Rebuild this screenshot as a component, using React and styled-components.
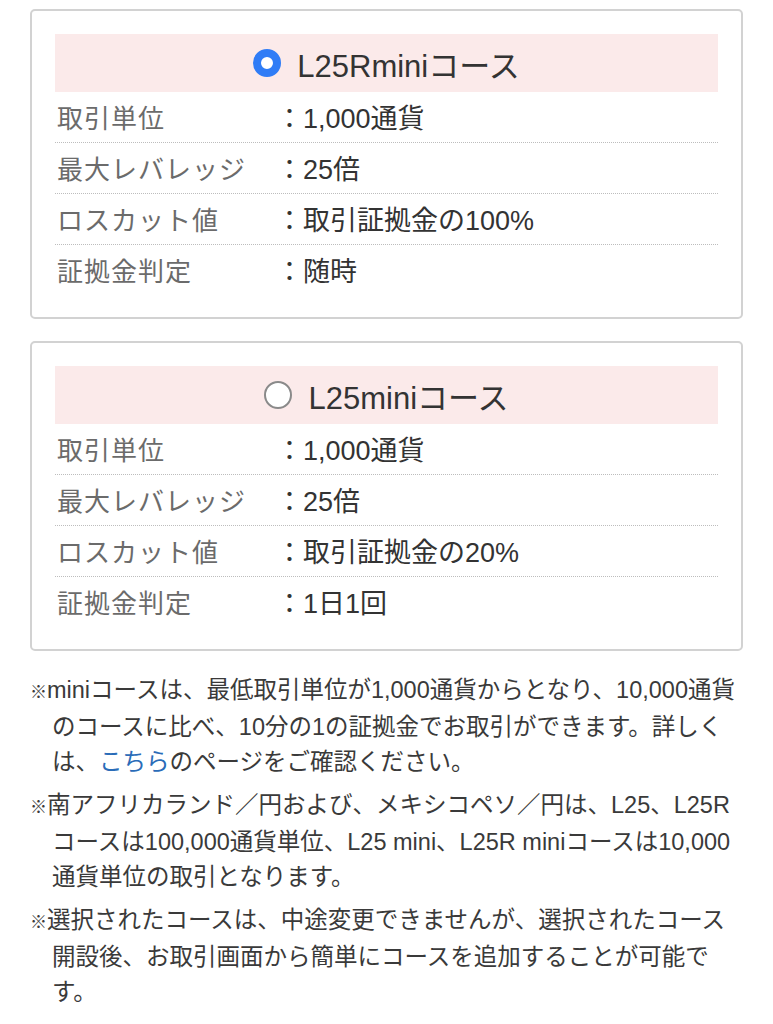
import React, { useState } from 'react';
import styled, { createGlobalStyle } from 'styled-components';

const GlobalStyle = createGlobalStyle`
  body {
    margin: 0;
    background: #fff;
    font-family: "Liberation Sans", "Noto Sans CJK JP", sans-serif;
    color: #333;
  }
`;

const Page = styled.main`
  padding: 9px 30px 20px;
`;

const Card = styled.label`
  display: block;
  border: 2px solid #d2d2d2;
  border-radius: 5px;
  padding: 23px 23px 22px;
  margin-bottom: 22px;
  cursor: pointer;
`;

const Header = styled.div`
  display: flex;
  justify-content: center;
  align-items: center;
  gap: 16px;
  height: 58px;
  background: #fbeaea;
  font-size: 31px;
  color: #333;
`;

const Radio = styled.span`
  box-sizing: border-box;
  width: 28px;
  height: 28px;
  border-radius: 50%;
  border: ${({ checked }) => (checked ? '8.5px solid #2f7cf6' : '2.5px solid #8a8a8a')};
  background: #fff;
  flex-shrink: 0;
`;

const Row = styled.div`
  display: grid;
  grid-template-columns: 219px 1fr;
  align-items: center;
  height: 50px;
  padding-left: 2px;
  padding-bottom: 2px;
  box-sizing: border-box;
  & + & {
    border-top: 1px dotted #bdbdbd;
    height: 51px;
  }
`;

const Label = styled.span`
  color: #6b6b6b;
  font-size: 26px;
  letter-spacing: 1px;
`;

const Value = styled.span`
  color: #333;
  font-size: 27px;
  white-space: nowrap;
`;

const Notes = styled.div`
  margin-top: 20px;
  font-size: 23.5px;
  line-height: 35px;
  color: #3a3a3a;
  white-space: nowrap;
`;

const Note = styled.p`
  margin: 0 0 8px;
  padding-left: 22px;
  text-indent: -22px;
`;

const Mark = styled.span`
  font-size: 17px;
  display: inline-block;
  width: 17px;
  text-indent: 0;
`;

const Link = styled.a`
  color: #2a6cb8;
  text-decoration: none;
`;

const courses = [
  { id: 'l25rmini', name: 'L25Rminiコース', loss: '取引証拠金の100%', judge: '随時' },
  { id: 'l25mini', name: 'L25miniコース', loss: '取引証拠金の20%', judge: '1日1回' },
];

export default function App() {
  const [selected, setSelected] = useState('l25rmini');

  return (
    <Page>
      <GlobalStyle />
      {courses.map((c) => (
        <Card key={c.id} onClick={() => setSelected(c.id)}>
          <Header>
            <Radio checked={selected === c.id} />
            <span>{c.name}</span>
          </Header>
          <Row>
            <Label>取引単位</Label>
            <Value>：1,000通貨</Value>
          </Row>
          <Row>
            <Label>最大レバレッジ</Label>
            <Value>：25倍</Value>
          </Row>
          <Row>
            <Label>ロスカット値</Label>
            <Value>：{c.loss}</Value>
          </Row>
          <Row>
            <Label>証拠金判定</Label>
            <Value>：{c.judge}</Value>
          </Row>
        </Card>
      ))}
      <Notes>
        <Note>
          <Mark>※</Mark>miniコースは、最低取引単位が1,000通貨からとなり、10,000通貨<br />
          のコースに比べ、10分の1の証拠金でお取引ができます。詳しく<br />
          は、<Link href="#">こちら</Link>のページをご確認ください。
        </Note>
        <Note>
          <Mark>※</Mark>南アフリカランド／円および、メキシコペソ／円は、L25、L25R<br />
          コースは100,000通貨単位、L25 mini、L25R miniコースは10,000<br />
          通貨単位の取引となります。
        </Note>
        <Note>
          <Mark>※</Mark>選択されたコースは、中途変更できませんが、選択されたコース<br />
          開設後、お取引画面から簡単にコースを追加することが可能で<br />
          す。
        </Note>
      </Notes>
    </Page>
  );
}
